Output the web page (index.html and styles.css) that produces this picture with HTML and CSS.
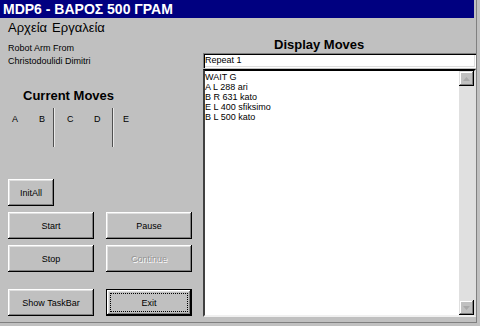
FILE: index.html
```html
<!DOCTYPE html>
<html>
<head>
<meta charset="utf-8">
<link rel="stylesheet" href="styles.css">
</head>
<body>
<div class="window">
  <div class="titlebar">MDP6 - ΒΑΡΟΣ 500 ΓΡΑΜ</div>
  <div class="menubar"><span class="menu-item first">Αρχεία</span><span class="menu-item">Εργαλεία</span></div>
  <div class="client">
    <div class="left">
      <div class="info">Robot Arm From<br>Christodoulidi Dimitri</div>
      <div class="heading cur">Current Moves</div>
      <div class="moves">
        <span class="axis a">A</span>
        <span class="axis b">B</span>
        <span class="sep"></span>
        <span class="axis c">C</span>
        <span class="axis d">D</span>
        <span class="sep"></span>
        <span class="axis e">E</span>
      </div>
      <div class="btnrow r0"><button class="btn small">InitAll</button></div>
      <div class="btnrow r1"><button class="btn">Start</button><button class="btn">Pause</button></div>
      <div class="btnrow r2"><button class="btn">Stop</button><button class="btn disabled">Continue</button></div>
      <div class="btnrow r3"><button class="btn">Show TaskBar</button><button class="btn default"><span class="focus">Exit</span></button></div>
    </div>
    <div class="right">
      <div class="heading disp">Display Moves</div>
      <div class="textbox">Repeat 1</div>
      <div class="listbox">
        <div class="items">
          <div>WAIT G</div>
          <div>A L 288 ari</div>
          <div>B R 631 kato</div>
          <div>E L 400 sfiksimo</div>
          <div>B L 500 kato</div>
        </div>
        <div class="scrollbar">
          <div class="sbtn"><svg width="7" height="4" viewBox="0 0 7 4"><path d="M3.5 0 L7 4 L0 4 Z" fill="#a8a8a8"/></svg></div>
          <div class="track"></div>
          <div class="sbtn"><svg width="7" height="4" viewBox="0 0 7 4"><path d="M0 0 L7 0 L3.5 4 Z" fill="#a8a8a8"/></svg></div>
        </div>
      </div>
    </div>
  </div>
</div>
</body>
</html>
```
FILE: styles.css
```css
html, body {
  margin: 0;
  padding: 0;
}
body {
  width: 480px;
  height: 326px;
  background: #c0c0c0;
  font-family: "Liberation Sans", Arial, sans-serif;
  overflow: hidden;
}
.window {
  width: 476px;
  height: 322px;
  border-right: 1px solid #808080;
  border-bottom: 1px solid #808080;
  display: flex;
  flex-direction: column;
}
.titlebar {
  height: 18px;
  margin-right: 2px;
  background: #000080;
  color: #fff;
  font-weight: bold;
  font-size: 14px;
  line-height: 19px;
  padding-left: 3px;
  white-space: nowrap;
}
.menubar {
  height: 17px;
  display: flex;
  font-size: 13px;
  line-height: 17px;
  padding-top: 1px;
  color: #000;
}
.menu-item {
  margin-left: 5px;
}
.menu-item.first {
  margin-left: 8px;
}
.client {
  flex: 1;
  display: flex;
}
.left {
  width: 203px;
  display: flex;
  flex-direction: column;
}
.info {
  margin-top: 6px;
  margin-left: 8px;
  font-size: 9px;
  line-height: 13px;
}
.heading {
  font-size: 13px;
  font-weight: bold;
  line-height: 16px;
  color: #000;
}
.heading.cur {
  margin-top: 20px;
  margin-left: 23px;
}
.moves {
  margin-top: 4px;
  height: 39px;
  display: flex;
  font-size: 9px;
  line-height: 11px;
}
.axis {
  padding-top: 6px;
}
.axis.a { margin-left: 12px; width: 27px; }
.axis.b { width: 14px; }
.axis.c { margin-left: 12px; width: 27px; }
.axis.d { width: 18px; }
.axis.e { margin-left: 9px; }
.sep {
  width: 1px;
  height: 39px;
  background: #505050;
  border-right: 1px solid #e8e8e8;
}
.btnrow {
  display: flex;
  gap: 12px;
  margin-left: 8px;
}
.btnrow.r0 { margin-top: 32px; }
.btnrow.r1 { margin-top: 6px; }
.btnrow.r2 { margin-top: 6px; }
.btnrow.r3 { margin-top: 17px; }
.btn {
  width: 86px;
  height: 27px;
  padding: 0;
  margin: 0;
  border: none;
  background: #c0c0c0;
  font-family: "Liberation Sans", Arial, sans-serif;
  font-size: 9px;
  color: #000;
  box-shadow: inset -1px -1px #000, inset 1px 1px #fff, inset -2px -2px #808080, inset 2px 2px #dfdfdf;
  display: flex;
  align-items: center;
  justify-content: center;
}
.btn.small {
  width: 46px;
}
.btn.disabled {
  color: #939393;
  text-shadow: 1px 1px #fff;
}
.btn.default {
  box-shadow: inset 0 0 0 1px #000, inset -2px -2px #000, inset 2px 2px #fff, inset -3px -3px #808080, inset 3px 3px #dfdfdf;
}
.focus {
  width: 76px;
  height: 17px;
  outline: 1px dotted #000;
  display: flex;
  align-items: center;
  justify-content: center;
}
.right {
  width: 273px;
  display: flex;
  flex-direction: column;
}
.heading.disp {
  margin-top: 1px;
  margin-left: 71px;
}
.textbox {
  height: 15px;
  background: #fff;
  font-size: 9px;
  line-height: 15px;
  padding-left: 2px;
  box-shadow: inset 1px 1px #808080, inset 2px 2px #000, inset -1px -1px #fff, inset -2px -2px #dfdfdf;
}
.listbox {
  margin-top: 1px;
  height: 248px;
  box-sizing: border-box;
  background: #fff;
  border-top: 2px solid #000;
  border-left: 2px solid #404040;
  border-right: 2px solid #dfdfdf;
  border-bottom: 2px solid #f0f0f0;
  display: flex;
}
.items {
  flex: 1;
  padding-top: 1px;
  font-size: 9px;
  line-height: 10px;
}
.scrollbar {
  width: 15px;
  display: flex;
  flex-direction: column;
  background: #e0e0e0;
}
.sbtn {
  height: 15px;
  background: #c0c0c0;
  box-shadow: inset -1px -1px #000, inset 1px 1px #dfdfdf, inset -2px -2px #808080, inset 2px 2px #fff;
  display: flex;
  align-items: center;
  justify-content: center;
}
.track {
  flex: 1;
}
```
